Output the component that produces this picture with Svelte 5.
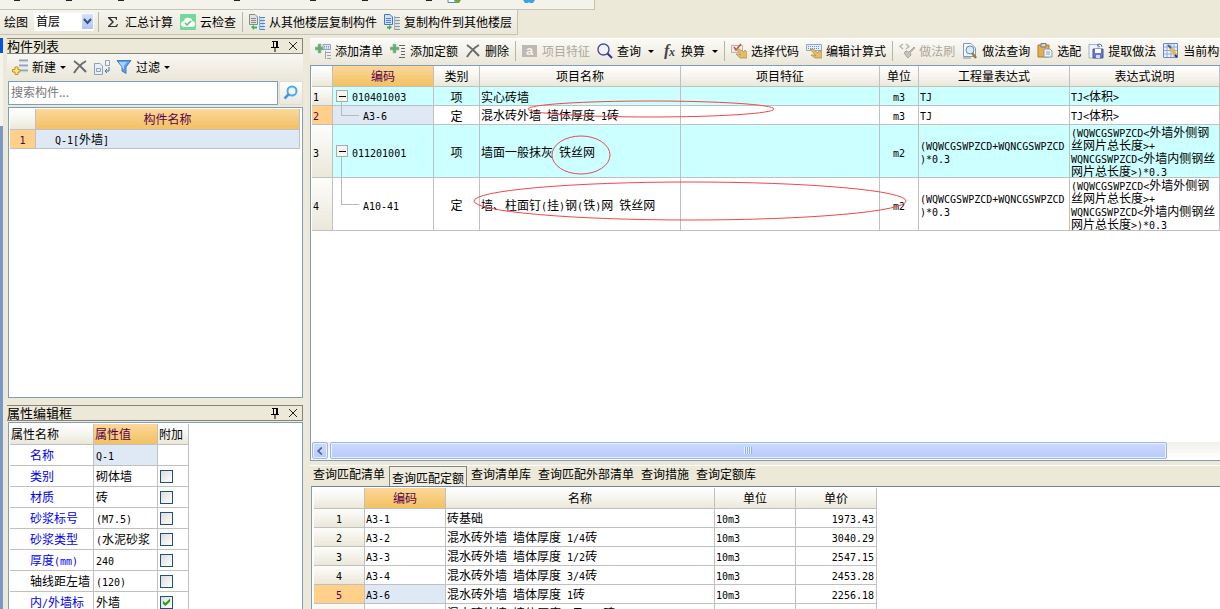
<script>
  const icons = {
    sum: '<path d="M3 3H12V6H11.3Q11 4 9.500 4H5.500L9 8L5 12H10Q11.500 12 12 10H13L12 13H3V12L7 8L3 4Z" fill="#333"/>',
    cloud: '<rect width="16" height="16" rx="1" fill="#74d99a"/><path d="M4 13Q0 12 1 9Q2 7 4 7Q5 3 9 4Q12 4 12 7Q15 7 15 10Q15 13 12 13Z" fill="#fff"/><path d="M5 9L7 11L11 7" fill="none" stroke="#58bd7d" stroke-width="1.500"/>',
    copyFrom: '<path d="M.5 .5H6L8.500 3V10.500H.5Z" fill="#e2e2e2" stroke="#8a8a8a"/><path d="M2 4.500H7M2 6.500H7M2 8.500H7" stroke="#888"/><path d="M11 3.500H16M11 6.500H16M11 9.500H16M11 12.500H16M11 15.500H16" stroke="#4f86d6"/><path d="M11 5H15M11 8H15M11 11H15M11 14H15" stroke="#a9c8f3"/><path d="M10.500 2V16" stroke="#86aee8"/><path d="M2 13L5 11V12.500H8V14.500H5V16Z" fill="#44b058"/>',
    copyTo: '<path d="M.5 .5H6L8.500 3V10.500H.5Z" fill="#cfe0fa" stroke="#4676ca"/><path d="M2 4.500H7M2 6.500H7M2 8.500H7" stroke="#5481cf"/><path d="M11 3.500H16M11 6.500H16M11 9.500H16M11 12.500H16M11 15.500H16" stroke="#8c96a6"/><path d="M11 5H15M11 8H15M11 11H15M11 14H15" stroke="#cdd4de"/><path d="M10.500 2V16" stroke="#a5b0c0"/><path d="M8 13L5 11V12.500H3V14.500H5V16Z" fill="#44b058"/>',
    newItem: '<path d="M7 1.500H16M7 6.500H16M7 11.500H16" stroke="#8fa2b9" stroke-width="2"/><path d="M7 3H15M7 8H15M7 13H15" stroke="#d4deea"/><path d="M3 8H6V10.500H8V13H6V15.500H3V13H.5V10.500H3Z" fill="#ffe680" stroke="#bd9321"/>',
    remove: '<path d="M2 2Q8 6 14 13M14 2Q7 6 2 14" fill="none" stroke="#6b6b6b" stroke-width="2"/>',
    pages: '<path d="M.5 4.500H6L8.500 7V15.500H.5ZM2.500 9.500H6.500V12.500H2.500Z" fill="#e7effa" stroke="#91a0b5"/><path d="M11.500 1.500H15.500V6.500H11.500Z" fill="#eef3fb" stroke="#91a0b5"/><path d="M15 8V12H11M13 10L11 12L13 14" fill="none" stroke="#426fc2"/>',
    filter: '<path d="M1 1.500H15L10 8V14.500L6 12V8Z" fill="#5b9be5" stroke="#437fc9"/><path d="M3 3H11L8 7V11" fill="#a8d1ff"/>',
    addList: '<path d="M3 1H6V4H9V7H6V10H3V7H0V4H3Z" fill="#6aa874" stroke="#9cc6a2" stroke-width=".6"/><path d="M8 1.500H15.500V6.500H8Z" fill="#dee7f3" stroke="#8ea3bd"/><path d="M9 3.500H15M9 5H15" stroke="#7d9abc" stroke-dasharray="1 1"/><path d="M10 9.500H16M12 12.500H16M12 15.500H16M10.500 8V16" stroke="#a0a0a0"/>',
    addQuota: '<path d="M3 1H6V4H9V7H6V10H3V7H0V4H3Z" fill="#6aa874" stroke="#9cc6a2" stroke-width=".6"/><path d="M9 2.500H15M11 5.500H15M11 8.500H15M11 11.500H15M9 14.500H15" stroke="#666"/>',
    feature: '<path d="M0 2H15V14H0Z" fill="#bcbab2"/><text x="4" y="12" font-family="Liberation Sans" font-weight="bold" font-size="13" fill="#f4f2ed">a</text>',
    search: '<circle cx="6.500" cy="6.500" r="5.500" fill="#f2f3ff" stroke="#4a4ba8" stroke-width="1.400"/><path d="M10.500 10.500L15 15" stroke="#303292" stroke-width="2"/>',
    fx: '<text x="3" y="13" font-family="Liberation Serif" font-style="italic" font-weight="bold" font-size="16" fill="#444">f</text><text x="8" y="13" font-family="Liberation Serif" font-style="italic" font-weight="bold" font-size="12" fill="#444">x</text>',
    chooseCode: '<path d="M.5 2.500H11.500V9.500H.5Z" fill="#ececec" stroke="#b5b5b5"/><path d="M3 4L5 7L10 1" fill="none" stroke="#d54c38" stroke-width="1.500"/><path d="M5 6L8 6L13 9L14 7L16 9V15H9L5 11H7L10 12Z" fill="#e3bd68" stroke="#ad8742" stroke-width=".7"/>',
    editExpr: '<path d="M.5 1.500H15.500V7.500H.5Z" fill="#e5edf7" stroke="#8faac8"/><path d="M2 3.500H14M2 5.500H14" stroke="#6e90ba" stroke-dasharray="1 1"/><path d="M4 6L7 6L12 10L13 8L16 8V15H9L5 12H8L10 13Z" fill="#e3bd68" stroke="#ad8742" stroke-width=".7"/>',
    brush: '<path d="M4 1L1 3.500L4 6M7 1L10 3.500L7 6" fill="none" stroke="#b4b3aa" stroke-width="1.300"/><path d="M15 4L10 9L7 8L5 10L9 15L12 12L11 10L16 5Z" fill="#c5c3ba" stroke="#aaa89f"/>',
    preview: '<path d="M1.500 .5H9L13.500 5V13.500H1.500Z" fill="#f5f8fc" stroke="#8298b5"/><circle cx="8" cy="7" r="4" fill="#d6ebfa" stroke="#668aa9"/><path d="M10 10L14 15" stroke="#a27a36" stroke-width="2.500"/><path d="M1 15H9" stroke="#7895b6"/>',
    paste: '<path d="M1 2H12V14H1Z" fill="#e4ae48" stroke="#a97b2c"/><path d="M4 .5H9V4H4Z" fill="#d5d5d5" stroke="#777"/><path d="M7 6H13L15 8V14H7Z" fill="#edf3fb" stroke="#8b9bad"/><path d="M9 9H13M9 11H13" stroke="#8ba3be"/>',
    extract: '<path d="M1 1.500H10V15H1Z" fill="#f1f5fb" stroke="#a0b4ce"/><path d="M5 6H15V15H5Z" fill="#6877cc" stroke="#4557a6"/><path d="M7 6H13V10H7Z" fill="#fff"/><path d="M8 12H12V15H8Z" fill="#d8def5"/><path d="M14 4Q14 1 11 1M11 1L9 2L12 4" fill="none" stroke="#4c76bd"/>',
    current: '<path d="M.5 .5H14.500V14.500H.5Z" fill="#edf3ff" stroke="#6a88ca"/><path d="M1 4H14M1 7.500H14M1 11H14M4 1V14M8 1V14M11 1V14" stroke="#8fa8dc"/><path d="M7 4L13 12" stroke="#e8b444" stroke-width="3"/><path d="M5 2L8 5" stroke="#46619d" stroke-width="2"/><path d="M12 12L14 14" stroke="#333" stroke-width="2"/>',
    find: '<circle cx="9" cy="6" r="4.500" fill="#eaf7ff" stroke="#52a9e6" stroke-width="2"/><path d="M6 9L1.500 13.500" stroke="#4596d8" stroke-width="2.500"/>',
    pin: '<path d="M5 3.500H11M6.500 3V9M9.500 3V9M10.500 3V9M4 9.500H12M8 10V14" fill="none" stroke="#000"/>',
    close: '<path d="M4 4L12 12M12 4L4 12" stroke="#222"/>',
    left: '<path d="M10 4L6 8L10 12" fill="none" stroke="#4d6185" stroke-width="2"/>'
  };

  const tools = [
    ['addList', '添加清单'], ['addQuota', '添加定额'], ['remove', '删除'], null,
    ['feature', '项目特征', 'off'], ['search', '查询', 'menu'], ['fx', '换算', 'menu'], null,
    ['chooseCode', '选择代码'], ['editExpr', '编辑计算式'], null,
    ['brush', '做法刷', 'off'], ['preview', '做法查询'], ['paste', '选配'],
    ['extract', '提取做法'], ['current', '当前构件']
  ];

  const expr = '(WQWCGSWPZCD+WQNCGSWPZCD\n)*0.3';
  const note = '(WQWCGSWPZCD<外墙外侧钢\n丝网片总长度>+\nWQNCGSWPZCD<外墙内侧钢丝\n网片总长度>)*0.3';
  const items = [
    { code: '010401003', kind: '项', name: '实心砖墙', unit: 'm3', expr: 'TJ', note: 'TJ<体积>' },
    { code: 'A3-6', kind: '定', name: '混水砖外墙 墙体厚度 1砖', unit: 'm3', expr: 'TJ', note: 'TJ<体积>', child: true, current: true },
    { code: '011201001', kind: '项', name: '墙面一般抹灰 铁丝网', unit: 'm2', expr, note, tall: true },
    { code: 'A10-41', kind: '定', name: '墙、柱面钉(挂)钢(铁)网 铁丝网', unit: 'm2', expr, note, tall: true, child: true }
  ];

  const props = [
    ['名称', 'Q-1', null], ['类别', '砌体墙', false], ['材质', '砖', false],
    ['砂浆标号', '(M7.5)', false], ['砂浆类型', '(水泥砂浆', false], ['厚度(mm)', '240', false],
    ['轴线距左墙', '(120)', false, 'plain'], ['内/外墙标', '外墙', true]
  ];

  const tabs = ['查询匹配清单', '查询匹配定额', '查询清单库', '查询匹配外部清单', '查询措施', '查询定额库'];
  const quotas = [
    ['A3-1', '砖基础', '1973.43'],
    ['A3-2', '混水砖外墙 墙体厚度 1/4砖', '3040.29'],
    ['A3-3', '混水砖外墙 墙体厚度 1/2砖', '2547.15'],
    ['A3-4', '混水砖外墙 墙体厚度 3/4砖', '2453.28'],
    ['A3-6', '混水砖外墙 墙体厚度 1砖', '2256.18'],
    ['A3-7', '混水砖外墙 墙体厚度 1及1/2砖', '2230.64']
  ];

  const runs = (text) => text.match(/[\x00-\x7f]+|[^\x00-\x7f]+/g) ?? [];
</script>

{#snippet icon(name)}
  <svg class="icon" viewBox="0 0 16 16" aria-hidden="true">{@html icons[name]}</svg>
{/snippet}

{#snippet mix(text)}{#each runs(text) as run}{#if run.charCodeAt(0) < 128}<span class="half">{run}</span>{:else}{run}{/if}{/each}{/snippet}

{#snippet title(text)}
  <header class="title">
    <h2>{text}</h2>
    <button aria-label="固定">{@render icon('pin')}</button>
    <button aria-label="关闭">{@render icon('close')}</button>
  </header>
{/snippet}

<div class="app">
  <div class="menubar" aria-hidden="true">
    <svg width="594" height="9" viewBox="0 0 594 9">
      <path d="M14 .5H20M66 .5H72M118 .5H124M234 .5H240M310 .5H316M362 .5H368M426 .5H432" stroke="#222" />
      <path d="M448 0V2.500H457V0" fill="#fff" stroke="#4b8bc8" /><path d="M454 0H461L459 3H455Z" fill="#66ad3e" />
      <path d="M523 0H535L533 3H530L529 2L528 3H525Z" fill="#3aa2ea" />
    </svg>
  </div>

  <nav class="bar floors">
    <span class="draw">绘图</span>
    <label class="floor">
      <select aria-label="楼层"><option>首层</option></select>
      <svg viewBox="0 0 11 15" aria-hidden="true"><path d="M2 5L5.500 9L9 5" fill="none" stroke="#33517f" stroke-width="2" /></svg>
    </label>
    <i class="sep"></i>
    <button class="tool">{@render icon('sum')}汇总计算</button>
    <button class="tool">{@render icon('cloud')}云检查</button>
    <i class="sep"></i>
    <button class="tool">{@render icon('copyFrom')}从其他楼层复制构件</button>
    <button class="tool">{@render icon('copyTo')}复制构件到其他楼层</button>
  </nav>

  <div class="body">
    <div class="edge"></div>
    <aside>
      <section class="list">
        {@render title('构件列表')}
        <div class="bar side">
          <button class="tool">{@render icon('newItem')}新建<i class="arrow"></i></button>
          <button class="tool" aria-label="删除">{@render icon('remove')}</button>
          <button class="tool" aria-label="复制">{@render icon('pages')}</button>
          <button class="tool">{@render icon('filter')}过滤<i class="arrow"></i></button>
        </div>
        <div class="search">
          <input type="text" placeholder="搜索构件..." aria-label="搜索构件" />
          <button aria-label="搜索">{@render icon('find')}</button>
        </div>
        <div class="pane">
          <table>
            <colgroup><col class="w26" /><col /></colgroup>
            <thead><tr><th></th><th class="hot">构件名称</th></tr></thead>
            <tbody><tr><td class="num picked">{@render mix('1')}</td><td class="sel part">{@render mix('Q-1[外墙]')}</td></tr></tbody>
          </table>
        </div>
      </section>

      <section class="attrs">
        {@render title('属性编辑框')}
        <div class="pane">
          <table class="props">
            <colgroup><col class="w84" /><col class="w64" /><col class="w31" /></colgroup>
            <thead><tr><th>属性名称</th><th class="hot">属性值</th><th>附加</th></tr></thead>
            <tbody>
              {#each props as [name, value, extra, plain], i}
                <tr>
                  <td class="key" class:plain>{@render mix(name)}</td>
                  <td class:sel={i === 0}>{@render mix(value)}</td>
                  <td>{#if extra !== null}<input type="checkbox" checked={extra} aria-label={name} />{/if}</td>
                </tr>
              {/each}
            </tbody>
          </table>
        </div>
      </section>
    </aside>

    <main>
      <div class="bar tools">
        {#each tools as t}
          {#if t}
            <button class="tool" disabled={t[2] === 'off'}>{@render icon(t[0])}{t[1]}{#if t[2] === 'menu'}<i class="arrow far"></i>{/if}</button>
          {:else}<i class="sep"></i>{/if}
        {/each}
      </div>

      <div class="grid">
        <table class="items">
          <colgroup>
            <col class="w21" /><col class="w101" /><col class="w46" /><col class="w201" />
            <col class="w199" /><col class="w39" /><col class="w151" /><col />
          </colgroup>
          <thead>
            <tr><th></th><th class="hot">编码</th><th>类别</th><th>项目名称</th><th>项目特征</th><th>单位</th><th>工程量表达式</th><th>表达式说明</th></tr>
          </thead>
          <tbody>
            {#each items as r, i}
              <tr class:cyan={!r.child} class:tall={r.tall}>
                <td class="num" class:picked={r.current}>{@render mix(String(i + 1))}</td>
                <td class="tree" class:child={r.child} class:sel={r.current}>
                  {#if !r.child}<button class="fold" aria-label="折叠"></button>{/if}{@render mix(r.code)}
                </td>
                <td class="mid">{r.kind}</td>
                <td>{@render mix(r.name)}</td>
                <td></td>
                <td class="mid">{@render mix(r.unit)}</td>
                <td>{@render mix(r.expr)}</td>
                <td>{@render mix(r.note)}</td>
              </tr>
            {/each}
          </tbody>
        </table>
        <svg class="marks" viewBox="0 0 600 160" aria-hidden="true">
          <g fill="none" stroke="#f04848">
            <ellipse cx="339" cy="43" rx="123" ry="8" />
            <ellipse cx="269" cy="89" rx="29" ry="19" />
            <ellipse cx="378" cy="135" rx="216" ry="19" />
          </g>
        </svg>
        <div class="scroll">
          <button aria-label="向左滚动">{@render icon('left')}</button>
          <div class="track"><div class="thumb"><i></i></div></div>
        </div>
      </div>

      <div class="tabs" role="tablist">
        {#each tabs as tab, i}<button role="tab" aria-selected={i === 1}>{tab}</button>{/each}
      </div>

      <div class="grid lower">
        <table class="quotas">
          <colgroup><col class="w51" /><col class="w81" /><col class="w269" /><col class="w81" /><col class="w81" /></colgroup>
          <thead><tr><th></th><th class="hot">编码</th><th>名称</th><th>单位</th><th>单价</th></tr></thead>
          <tbody>
            {#each quotas as [code, name, price], i}
              <tr>
                <td class="num" class:picked={i === 4}>{@render mix(String(i + 1))}</td>
                <td class:sel={i === 4}>{@render mix(code)}</td>
                <td>{@render mix(name)}</td>
                <td>{@render mix('10m3')}</td>
                <td class="price">{@render mix(price)}</td>
              </tr>
            {/each}
          </tbody>
        </table>
      </div>
    </main>
  </div>
</div>

<style>
  :global(body) { margin: 0; background: #ece9d8; }
  .app, .app :global(*) { box-sizing: border-box; }
  .app {
    height: 100vh; display: flex; flex-direction: column; overflow: hidden;
    font: 12px/12px "Noto Sans CJK SC", sans-serif; color: #000; background: #ece9d8; white-space: nowrap;
  }
  button, input, select { font: inherit; color: inherit; }
  button { border: 0; padding: 0; background: none; }
  i { display: block; flex: none; }
  .icon { width: 16px; height: 16px; flex: none; display: block; }
  .half { font: 10px/10px "DejaVu Sans Mono", monospace; }

  .menubar { flex: none; height: 10px; width: 595px; background: #f3f2eb; border: solid #c6c3b3; border-width: 0 1px 1px 0; }
  .menubar svg { display: block; }
  .bar { display: flex; align-items: center; flex: none; }
  .floors {
    align-self: flex-start; height: 25px; padding: 0 1px 0 4px; margin-bottom: 3px;
    background: linear-gradient(#f6f5ee, #eae7d9); border: solid #c6c3b3; border-width: 0 1px 1px 0;
  }
  .floor { position: relative; margin: 0 2px 0 6px; }
  .floor select { display: block; width: 60px; height: 18px; padding: 0 0 2px 2px; border: 0; background: #fff; appearance: none; }
  .floor svg { position: absolute; top: 1px; right: 1px; width: 11px; height: 15px; background: linear-gradient(#d5e1fd, #adc5f7); pointer-events: none; }
  .sep { width: 1px; height: 20px; margin: 0 3px 0 2px; background: #b8b5a5; }
  .tool { display: flex; align-items: center; gap: 4px; padding: 0 4px 0 3px; flex: none; }
  .tool:disabled { color: #aca899; }
  .arrow { border: solid transparent; border-width: 3px 3px 0; border-top-color: #000; }
  .arrow.far { margin: 0 0 0 3px; }

  .body { flex: 1; min-height: 0; display: flex; }
  .edge { width: 3px; margin-right: 4px; flex: none; background: linear-gradient(#0a50e0 15px, #f4f3ec 15px, #f4f3ec 88px, #7a98c4 88px); }
  aside { width: 296px; flex: none; display: flex; flex-direction: column; gap: 7px; }
  section { display: flex; flex-direction: column; min-height: 0; }
  .list { height: 360px; flex: none; }
  .attrs { flex: 1; }
  .title { display: flex; align-items: center; height: 16px; flex: none; padding-right: 1px; border: 1px solid #85837a; border-left-width: 0; }
  .title h2 { flex: 1; margin: 0; font: inherit; font-size: 13px; }
  .title button { margin-left: 2px; }
  .side { height: 26px; padding-left: 2px; background: linear-gradient(#f8f7f2, #eae7d9); }
  .side .tool { padding: 0 3px; }
  .search { display: flex; height: 24px; flex: none; margin: 1px 0 2px 1px; }
  .search input { flex: 1; min-width: 0; border: 1px solid #7f9db9; padding: 0 2px 4px; background: #fff; outline: 0; border-radius: 0; }
  .search input::placeholder { color: #777; opacity: 1; }
  .search button { width: 24px; margin-left: 1px; padding-left: 3px; background: linear-gradient(#fff, #e9e7df); border: 1px solid #e0ddd0; border-radius: 2px; }
  .pane { flex: 1; min-height: 0; overflow: hidden; margin-left: 1px; padding: 1px 2px 1px 1px; background: #fff; border: 1px solid #7f9db9; }
  .attrs .pane { margin-top: 1px; border-bottom: 0; }

  table { width: 100%; table-layout: fixed; border-collapse: separate; border-spacing: 0; background: #fff; }
  th, td { padding: 0 1px; height: 19px; border: solid #c0c0c0; border-width: 0 1px 1px 0; overflow: hidden; white-space: pre; }
  th { height: 21px; font-weight: normal; background: linear-gradient(#fff, #f6f5ef 50%, #ebe8d9); }
  th.hot { color: #58004c; background: linear-gradient(#fbd79a, #f3c162); }
  .num { text-align: center; background: linear-gradient(#fdfdfb, #ebe8d9); }
  .num.picked { background: #ffd08a; color: #58004c; }
  .sel { background: #dfe9f6; }
  .mid { text-align: center; }
  .part { padding-left: 19px; }
  .w21 { width: 21px; } .w26 { width: 26px; } .w31 { width: 31px; } .w39 { width: 39px; }
  .w46 { width: 46px; } .w51 { width: 51px; } .w64 { width: 64px; } .w81 { width: 81px; }
  .w84 { width: 84px; } .w101 { width: 101px; } .w151 { width: 151px; } .w199 { width: 199px; }
  .w201 { width: 201px; } .w269 { width: 269px; }

  .props { width: 179px; }
  .props th { text-align: left; }
  .props td { height: 21px; padding-left: 2px; }
  .props .key { padding-left: 20px; color: #0000f0; }
  .props .plain { color: #000; }
  .props input {
    display: block; appearance: none; width: 13px; height: 13px; margin: 0; padding: 1px;
    border: 1px solid #1c5180; background: linear-gradient(135deg, #dcdcd7, #fff);
  }
  .props input:checked::after {
    content: ""; display: block; width: 9px; height: 9px; background: #21a121;
    clip-path: polygon(10% 35%, 38% 60%, 90% 10%, 90% 45%, 38% 95%, 10% 70%);
  }

  main { flex: 1; min-width: 0; display: flex; flex-direction: column; margin-left: 7px; }
  .tools { height: 27px; padding: 0 0 2px 2px; overflow: hidden; background: linear-gradient(#fbfaf6, #eae7d9); border-top: 1px solid #fff; }
  .grid { position: relative; flex: none; display: flex; flex-direction: column; height: 396px; padding-left: 1px; background: #fff; border: solid #7f9db9; border-width: 1px 0 1px 1px; }
  .items .num { text-align: left; }
  .items td { line-height: 13px; }
  .cyan td:not(.num) { background: #ccffff; }
  .tall td { height: 53px; }
  .tall .half { line-height: 0; }
  .tree { position: relative; padding-left: 19px; white-space: nowrap; }
  .tree.child { padding-left: 30px; }
  .fold { position: absolute; left: 3px; top: 50%; margin-top: -6px; width: 12px; height: 12px; border: 1px solid #aaa; background: linear-gradient(#000, #000) center / 7px 1px no-repeat #f5f5f0; }
  .tree:not(.child)::after { content: ""; position: absolute; left: 8px; top: 50%; bottom: 0; margin-top: 6px; border-left: 1px solid #b8b8b8; }
  .child::before { content: ""; position: absolute; left: 8px; top: 0; width: 17px; height: 50%; border: solid #b8b8b8; border-width: 0 0 1px 1px; }
  .marks { position: absolute; left: 1px; top: 0; width: 600px; height: 160px; pointer-events: none; }
  .scroll { display: flex; gap: 2px; height: 17px; margin-top: auto; margin-bottom: 1px; background: linear-gradient(#f0efe8, #fff); }
  .scroll button, .thumb { border: 1px solid #9db6ec; border-radius: 2px; background: linear-gradient(#ccdafd, #b7cbfa); box-shadow: inset 0 0 0 1px #e8effe; }
  .scroll button { width: 16px; }
  .scroll .icon { width: 14px; }
  .track { flex: 1; display: flex; }
  .thumb { width: 94%; display: grid; place-items: center; }
  .thumb i { width: 8px; height: 7px; background: repeating-linear-gradient(90deg, #eef4fe 0 1px, #8cb0f8 1px 2px); }

  .tabs { display: flex; align-items: stretch; gap: 1px; height: 21px; flex: none; margin-top: 4px; border-top: 1px solid #fff; }
  .tabs button { padding: 0 3px 4px; }
  .tabs button[aria-selected="true"] { padding: 2px 2px 0; border: 1px solid #85837a; border-bottom: 0; background: #f0eee2; }
  .lower { flex: 1; min-height: 0; overflow: hidden; margin-left: 1px; padding: 1px 0 0 2px; border-top-color: #6f8296; border-bottom: 0; }
  .quotas { width: 563px; }
  .quotas .price { text-align: right; padding-right: 2px; }
</style>
